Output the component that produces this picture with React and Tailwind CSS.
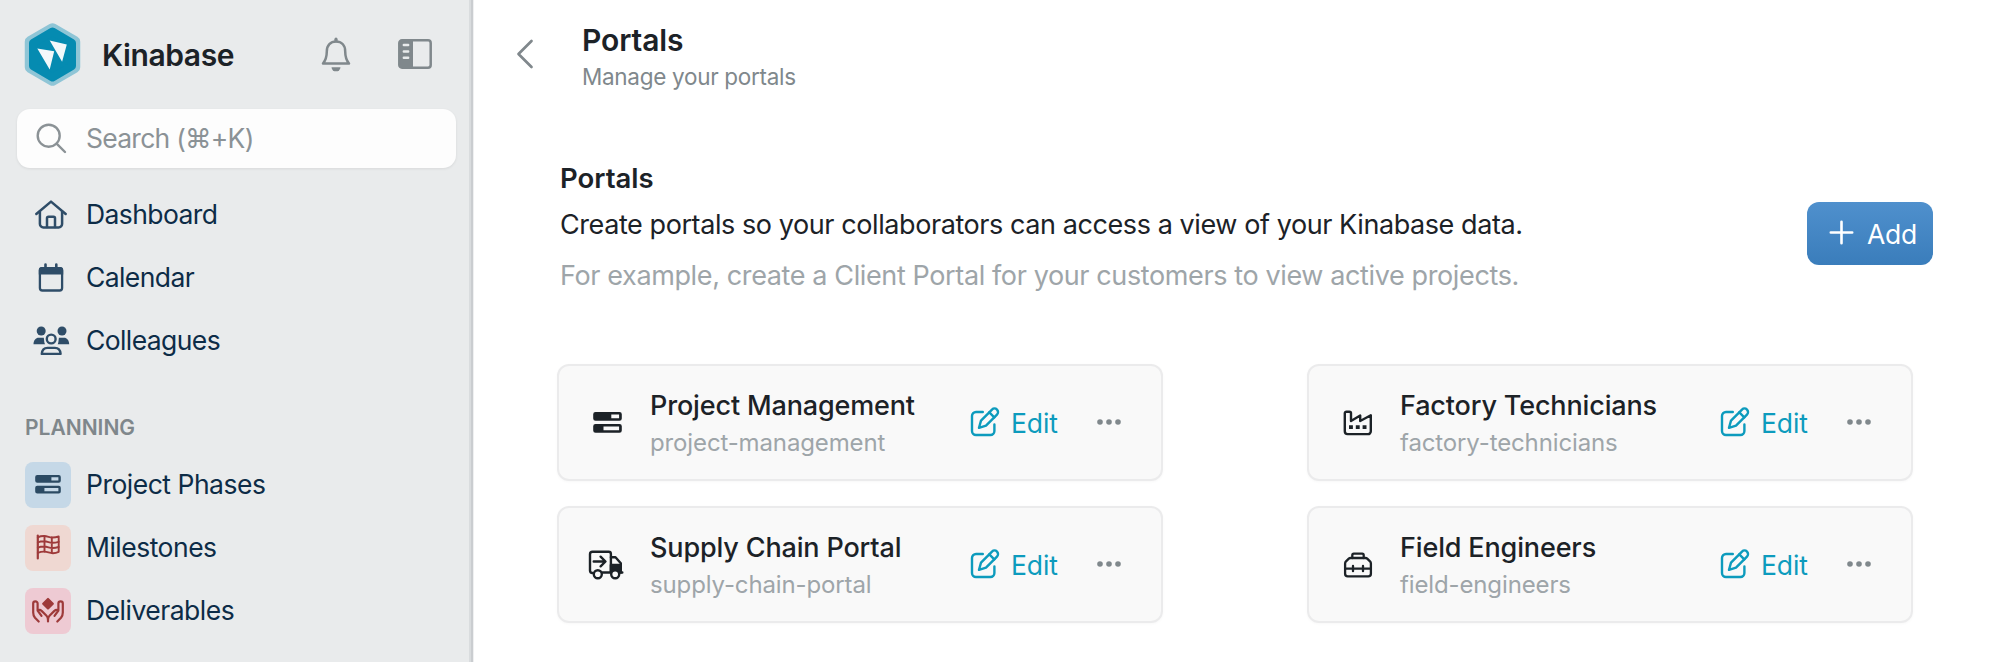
import React from 'react'

const navItems = [
  { label: 'Dashboard', icon: HomeIcon },
  { label: 'Calendar', icon: CalendarIcon },
  { label: 'Colleagues', icon: ColleaguesIcon },
]

const planningItems = [
  { label: 'Project Phases', icon: BarsIcon, tile: 'bg-[#c5d8e7] text-[#2b4a63]', size: 'w-[26px]' },
  { label: 'Milestones', icon: FlagIcon, tile: 'bg-[#efd8d2] text-[#9e3a3a]', size: 'w-[46px]' },
  { label: 'Deliverables', icon: HandsIcon, tile: 'bg-[#eecad3] text-[#9e3a3a]', size: 'w-[46px]' },
]

const portals = [
  { name: 'Project Management', slug: 'project-management', icon: BarsIcon, size: 'w-[29px]' },
  { name: 'Factory Technicians', slug: 'factory-technicians', icon: FactoryIcon, size: 'w-[30px]' },
  { name: 'Supply Chain Portal', slug: 'supply-chain-portal', icon: TruckIcon, size: 'w-[36px] -ml-[3px]' },
  { name: 'Field Engineers', slug: 'field-engineers', icon: ToolboxIcon, size: 'w-[30px]' },
]

export default function App() {
  return (
    <div className="flex w-[2000px] h-[662px] overflow-hidden bg-white font-['Inter','Liberation_Sans',sans-serif] text-[#1c2227]">
      <Sidebar />
      <main className="flex-1">
        <Header />
        <Intro />
        <div className="grid grid-cols-[606px_606px] gap-x-[144px] gap-y-[25px] pl-[83px] mt-[63px]">
          {portals.map((portal) => (
            <PortalCard key={portal.slug} portal={portal} />
          ))}
        </div>
      </main>
    </div>
  )
}

function Sidebar() {
  return (
    <aside className="flex w-[474px] shrink-0 bg-[#e9ebec]">
      <div className="w-[469px]">
        <div className="flex items-center h-[109px] pl-[24px]">
          <Logo />
          <span className="ml-[21px] w-[219px] text-[30px] font-semibold tracking-[-0.4px] leading-[36px]">Kinabase</span>
          <BellIcon />
          <SidebarIcon />
        </div>

        <div className="ml-[17px] w-[439px] h-[59px] rounded-[13px] bg-[#fdfdfd] shadow-[0_1px_3px_rgba(0,0,0,0.08)] flex items-center pl-[19px]">
          <SearchIcon />
          <span className="ml-[19px] mt-[1px] text-[26.5px] tracking-[-0.75px] text-[#8b9296]">Search (⌘+K)</span>
        </div>

        <nav className="mt-[15px]">
          {navItems.map(({ label, icon: Icon }) => (
            <a key={label} className="flex items-center h-[63px] pl-[33px] text-[26.5px] tracking-[-0.6px] text-[#0d2c47]">
              <Icon />
              <span className="ml-[16px] mt-[1px]">{label}</span>
            </a>
          ))}
        </nav>

        <h2 className="mt-[41px] ml-[25px] h-[30px] leading-[30px] text-[21px] font-semibold text-[#7f878b]">PLANNING</h2>
        <nav className="mt-[10px]">
          {planningItems.map(({ label, icon: Icon, tile, size }) => (
            <a key={label} className="flex items-center h-[63px] pl-[25px] text-[26.5px] tracking-[-0.5px] text-[#0d2c47]">
              <span className={`flex items-center justify-center w-[46px] h-[46px] rounded-lg ${tile}`}>
                <Icon className={size} />
              </span>
              <span className="ml-[15px] mt-[1px]">{label}</span>
            </a>
          ))}
        </nav>
      </div>
      <div className="w-[2px] bg-[#d9dcde]" />
      <div className="w-[2px] bg-[#cacdd0]" />
      <div className="w-[1px] bg-[#eff0f1]" />
    </aside>
  )
}

function Header() {
  return (
    <header className="flex h-[109px] pt-[20px] pl-[42px]">
      <svg width="18" height="32" viewBox="0 0 18 32" fill="none" className="mt-[18px]">
        <path d="M15.500 3L2.500 16l13 13" stroke="#80888c" strokeWidth="2.700" strokeLinecap="round" strokeLinejoin="round" />
      </svg>
      <div className="ml-[48px]">
        <h1 className="text-[30px] font-semibold tracking-[-0.1px] leading-[40px]">Portals</h1>
        <p className="text-[22.5px] tracking-[-0.3px] leading-[33px] text-[#80888c]">Manage your portals</p>
      </div>
    </header>
  )
}

function Intro() {
  return (
    <section className="flex items-center justify-between pl-[86px] pr-[67px] mt-[48px]">
      <div>
        <h2 className="text-[27.5px] font-semibold leading-[42px]">Portals</h2>
        <p className="text-[27px] tracking-[-0.42px] leading-[52px]">
          Create portals so your collaborators can access a view of your Kinabase data.
        </p>
        <p className="text-[27px] tracking-[-0.38px] leading-[50px] text-[#9ea5a9]">
          For example, create a Client Portal for your customers to view active projects.
        </p>
      </div>
      <button className="flex items-center w-[126px] h-[63px] mt-[9px] pl-[22px] rounded-xl bg-linear-to-b from-[#4f90cd] to-[#3a7dbb] text-white text-[26.5px] tracking-[-0.3px]">
        <svg width="25" height="25" viewBox="0 0 25 25" className="-mt-[2px]">
          <path d="M12.500 1.800v21.400M1.800 12.500h21.400" stroke="currentColor" strokeWidth="2.600" strokeLinecap="round" />
        </svg>
        <span className="ml-[13px] mt-[2px]">Add</span>
      </button>
    </section>
  )
}

function PortalCard({ portal }) {
  const Icon = portal.icon
  return (
    <div className="flex items-center h-[117px] pl-[30px] rounded-xl border-2 border-[#ebebec] bg-[#f9f9f9] shadow-[0_1px_3px_rgba(0,0,0,0.03)]">
      <span className="flex justify-center w-[37px]">
        <Icon className={portal.size} />
      </span>
      <div className="ml-[24px] w-[320px] mt-[1px]">
        <div className="text-[27px] font-medium tracking-[-0.15px] leading-[39px]">{portal.name}</div>
        <div className="text-[24px] tracking-[-0.13px] leading-[35px] text-[#9ea5a9]">{portal.slug}</div>
      </div>
      <button className="flex items-center text-[#0d9bbd] text-[26.5px] tracking-[-0.1px]">
        <EditIcon />
        <span className="ml-[11px] mt-[2px]">Edit</span>
      </button>
      <svg width="26" height="8" viewBox="0 0 26 8" fill="#80888c" className="ml-[38px] -mt-[2px]">
        <circle cx="4" cy="4" r="2.800" />
        <circle cx="13" cy="4" r="2.800" />
        <circle cx="22" cy="4" r="2.800" />
      </svg>
    </div>
  )
}

function Logo() {
  return (
    <svg width="57" height="63" viewBox="0 0 56 63" strokeLinejoin="round">
      <path d="M28 6L50 18.800V44.200L28 57L6 44.200V18.800Z" fill="#8fc5d6" stroke="#8fc5d6" strokeWidth="11.500" />
      <path d="M28 8.500L47.500 20V43L28 54.500L8.500 43V20Z" fill="#058bb1" stroke="#058bb1" strokeWidth="8" />
      <path d="M12.800 25.500L29.700 28.200L25.200 46.600Z M25.200 17.500L42.300 21.500L37.600 38.800Z" fill="#f2f8fa" />
    </svg>
  )
}

function BellIcon() {
  return (
    <svg width="30" height="35" viewBox="0 0 30 35" fill="none" stroke="#80888c" strokeWidth="2.500" strokeLinejoin="round" className="-mt-[1px]">
      <path d="M2 26.500C4.800 23 5.800 20 5.800 14.500C5.800 8.300 9.600 4.600 15 4.600s9.200 3.700 9.200 9.900C24.200 20 25.200 23 28 26.500Z" />
      <path d="M15 4V2.200" strokeLinecap="round" strokeWidth="3.200" />
      <path d="M10.500 30.300h9a4.500 4 0 0 1-9 0Z" fill="#80888c" stroke="none" />
    </svg>
  )
}

function SidebarIcon() {
  return (
    <svg width="34" height="30" viewBox="0 0 34 30" fill="none" stroke="#80888c" className="ml-[47px] -mt-[1px]">
      <path d="M4 1.300H15V28.700H4A2.700 2.700 0 0 1 1.300 26V4A2.700 2.700 0 0 1 4 1.300Z" fill="#80888c" stroke="none" />
      <rect x="1.300" y="1.300" width="31.400" height="27.400" rx="2.700" strokeWidth="2.500" />
      <path d="M5.800 6h4.400M5.800 12.500h4.400M5.800 18.700h4.400" stroke="#e9ebec" strokeWidth="2.400" strokeLinecap="round" />
    </svg>
  )
}

function SearchIcon() {
  return (
    <svg width="31" height="31" viewBox="0 0 31 31" fill="none" stroke="#8b9296" strokeWidth="2.400" strokeLinecap="round" className="-mt-[1px]">
      <circle cx="12.700" cy="12.700" r="11" />
      <path d="M20.600 20.600l8.400 8.400" />
    </svg>
  )
}

function HomeIcon() {
  return (
    <svg width="37" height="32" viewBox="0 0 37 32" fill="none" stroke="#2f4d68" strokeWidth="2.500" strokeLinecap="round" strokeLinejoin="round">
      <path d="M3.300 15L18 2.600L32.700 15" />
      <path d="M6.900 12.500V25a3.500 3.500 0 0 0 3.500 3.500h15.200a3.500 3.500 0 0 0 3.500-3.500V12.500" />
      <path d="M14 28V19.200a1.500 1.500 0 0 1 1.500-1.500h5a1.500 1.500 0 0 1 1.500 1.500V28" />
    </svg>
  )
}

function CalendarIcon() {
  return (
    <svg width="37" height="32" viewBox="0 0 37 32" fill="none" stroke="#2f4d68" strokeWidth="2.300">
      <path d="M5.800 12.500V8a3 3 0 0 1 3-3h18.400a3 3 0 0 1 3 3v4.500Z" fill="#2f4d68" stroke="none" />
      <rect x="6.900" y="6.100" width="22.200" height="22.400" rx="2.500" />
      <path d="M12.500 6V2.600M23.300 6V2.600" strokeWidth="2.600" strokeLinecap="round" />
    </svg>
  )
}

function ColleaguesIcon() {
  return (
    <svg width="37" height="32" viewBox="0 0 37 32" fill="#2f4d68" stroke="none">
      <circle cx="8.200" cy="6" r="4.500" />
      <circle cx="29" cy="6" r="4.500" />
      <path d="M0.500 19.300C0.600 15 3 12.800 5.500 12.800h5.300C11.300 15.500 11 17.500 12 19.300Z" />
      <path d="M36.200 19.300C36.100 15 33.700 12.800 31.200 12.800h-5.300C25.400 15.500 25.700 17.500 24.700 19.300Z" />
      <circle cx="18.200" cy="14" r="4.400" fill="none" stroke="#2f4d68" strokeWidth="2.400" />
      <path d="M8.800 28.900c.3-3.800 2.600-6 5.700-6h7.400c3.100 0 5.400 2.200 5.700 6Z" fill="none" stroke="#2f4d68" strokeWidth="2.400" strokeLinejoin="round" />
    </svg>
  )
}

// two progress bars
function BarsIcon({ className }) {
  return (
    <svg viewBox="0 0 29 21" fill="currentColor" fillRule="evenodd" className={className}>
      <path d="M2.500 0h24A2.300 2.300 0 0 1 28.800 2.300V6.400A2.300 2.300 0 0 1 26.500 8.700H2.500A2.300 2.300 0 0 1 .2 6.400V2.300A2.300 2.300 0 0 1 2.500 0ZM18.300 2.500V6.200h7.800V2.500Z" />
      <path d="M2.500 12h24A2.300 2.300 0 0 1 28.800 14.300V18.400A2.300 2.300 0 0 1 26.500 20.700H2.500A2.300 2.300 0 0 1 .2 18.400V14.300A2.300 2.300 0 0 1 2.500 12ZM10.500 14.500V18.200h15.600V14.500Z" />
    </svg>
  )
}

function FlagIcon({ className }) {
  return (
    <svg viewBox="0 0 46 46" fill="none" stroke="currentColor" strokeWidth="1.900" strokeLinecap="round" strokeLinejoin="round" className={className}>
      <path d="M12.800 10.500V33.500" strokeWidth="2.200" />
      <path d="M12.800 12.300C17 10.300 20 10.600 23.500 11.800S30 12.600 33.700 11.500V26.800C30 28.600 27 28.600 23.500 27.400S17 26.200 12.800 27.800" />
      <path d="M12.800 17.500C17 15.700 20 15.900 23.500 17.100S30 17.900 33.700 16.800M12.800 22.700C17 20.900 20 21.100 23.500 22.300S30 23.100 33.700 22M19.500 11v15.500M26.800 12.500v15.300" />
    </svg>
  )
}

function HandsIcon({ className }) {
  return (
    <svg viewBox="0 0 46 46" fill="none" stroke="currentColor" strokeWidth="2.200" strokeLinecap="round" strokeLinejoin="round" className={className}>
      <path d="M23 11L27.800 15.700L23 20.400L18.200 15.700Z" fill="currentColor" />
      <path d="M13.700 33.500L10 29.800Q8.200 27.600 8.200 24.500V15.500a2.200 2.200 0 0 1 4.400 0V22.500L16.500 27.800M12.600 22.500q2.300-1.400 4 .4L21.300 27.500q1.700 1.600 1.700 4v2" />
      <path d="M32.300 33.500L36 29.800Q37.800 27.600 37.800 24.500V15.500a2.200 2.200 0 0 0-4.400 0V22.500L29.500 27.800M33.400 22.500q-2.300-1.400-4 .4L24.700 27.500q-1.700 1.600-1.700 4" />
    </svg>
  )
}

function FactoryIcon({ className }) {
  return (
    <svg viewBox="0 0 30 26" fill="none" stroke="currentColor" strokeWidth="2.400" strokeLinejoin="round" className={className}>
      <path d="M1.800 3.300a1.600 1.600 0 0 1 1.600-1.600h3a1.600 1.600 0 0 1 1.600 1.600V11L17.200 5.500V11L27.800 5.300V21.300a2.800 2.800 0 0 1-2.800 2.800H4.600a2.800 2.800 0 0 1-2.800-2.800Z" />
      <path d="M6 15.300h3.900v3.800H6ZM12.800 15.300h3.900v3.800h-3.900ZM19.600 15.300h3.900v3.800h-3.900Z" fill="currentColor" stroke="none" />
    </svg>
  )
}

function TruckIcon({ className }) {
  return (
    <svg viewBox="0 0 36 30" fill="none" stroke="currentColor" strokeWidth="2.400" strokeLinecap="round" strokeLinejoin="round" className={className}>
      <path d="M4.500 23A2.500 2.500 0 0 1 2 20.500V4.200A2.500 2.500 0 0 1 4.500 1.700H20.700A2.200 2.200 0 0 1 22.900 3.900V22.500H14.500" />
      <path d="M5.700 11.500H17M12.600 6.700L17.500 11.500L12.600 16.300" />
      <path d="M22.900 7.300H27.500L32.800 13.300V22.500H34.300" />
      <path d="M22.900 15H32.800V22.500H22.900Z" fill="currentColor" />
      <circle cx="9.800" cy="24.200" r="4" className="fill-[#f9f9f9]" />
      <circle cx="27.200" cy="24.200" r="4" className="fill-[#f9f9f9]" />
    </svg>
  )
}

function ToolboxIcon({ className }) {
  return (
    <svg viewBox="0 0 30 26" fill="none" stroke="currentColor" strokeWidth="2.300" strokeLinecap="round" strokeLinejoin="round" className={className}>
      <path d="M9.300 6V3.200a1.500 1.500 0 0 1 1.500-1.500h8.400a1.500 1.500 0 0 1 1.500 1.500V6" />
      <path d="M7.500 6h15a2.500 2.500 0 0 1 1.700.7L27 9.400a3 3 0 0 1 .9 2.100V21.800a2.600 2.600 0 0 1-2.600 2.600H4.700a2.600 2.600 0 0 1-2.600-2.600V11.500A3 3 0 0 1 3 9.400L5.800 6.700A2.500 2.500 0 0 1 7.500 6Z" />
      <path d="M2.100 16.700H27.900M10 14v5.200M20 14v5.200" />
    </svg>
  )
}

function EditIcon() {
  return (
    <svg width="30" height="30" viewBox="0 0 30 30" fill="none" stroke="currentColor" strokeWidth="2.400" strokeLinecap="round" strokeLinejoin="round" className="-mt-[1px]">
      <path d="M12.800 5H6a4 4 0 0 0-4 4V24a4 4 0 0 0 4 4H20.400a4 4 0 0 0 4-4V17.500" />
      <path d="M9 20.800L11 13.600L22 2.600a3.500 3.500 0 0 1 5 5L16 18.600Z" />
      <path d="M19.300 5.300L24.300 10.300" />
    </svg>
  )
}
